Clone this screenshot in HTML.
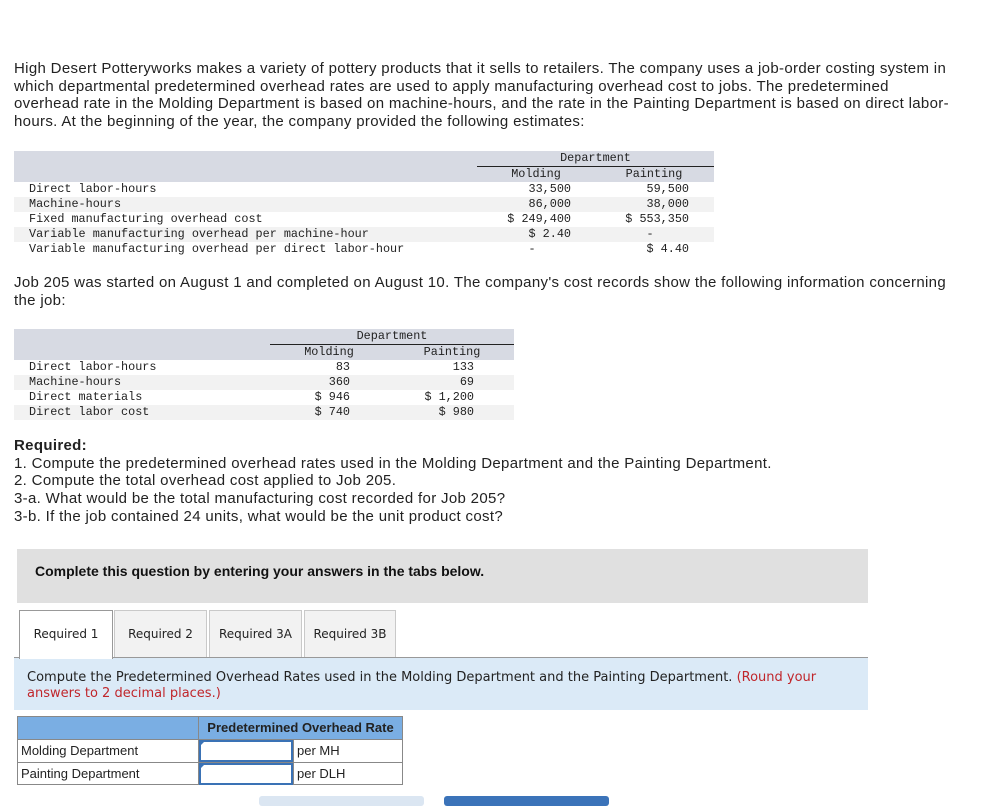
<!DOCTYPE html>
<html><head><meta charset="utf-8"><style>
*{margin:0;padding:0;box-sizing:border-box}
body{width:993px;height:803px;background:#fff;position:relative;overflow:hidden;font-family:"Liberation Sans",Arial,sans-serif;color:#222}
.a{position:absolute;white-space:nowrap}
.p{font-size:15px;line-height:17.7px;letter-spacing:0.33px}
.m{font-family:"Liberation Mono","DejaVu Sans Mono",monospace;font-size:11.8px;line-height:15px;color:#222}
.r{text-align:right}
.c{text-align:center}
.band{position:absolute;background:#d7dae3}
.str{position:absolute;background:#f2f2f2}
.tab{position:absolute;top:610px;height:48px;background:#f2f2f2;border:1px solid #c9c9c9;border-bottom:none;font-family:"DejaVu Sans",Verdana,sans-serif;font-size:12px;line-height:46px;text-align:center;color:#222}
</style></head><body>

<div class="a p" style="left:14px;top:60px">High Desert Potteryworks makes a variety of pottery products that it sells to retailers. The company uses a job-order costing system in<br>which departmental predetermined overhead rates are used to apply manufacturing overhead cost to jobs. The predetermined<br>overhead rate in the Molding Department is based on machine-hours, and the rate in the Painting Department is based on direct labor-<br>hours. At the beginning of the year, the company provided the following estimates:</div>

<div class="band" style="left:14px;top:151px;width:700px;height:31px"></div>
<div class="str" style="left:14px;top:197px;width:700px;height:15px"></div>
<div class="str" style="left:14px;top:227px;width:700px;height:15px"></div>
<div class="a" style="left:477px;top:166px;width:237px;height:1px;background:#222"></div>
<div class="a m c" style="left:477px;top:151px;width:237px">Department</div>
<div class="a m c" style="left:496px;top:167px;width:80px">Molding</div>
<div class="a m c" style="left:614px;top:167px;width:80px">Painting</div>
<div class="a m" style="left:29px;top:182px">Direct labor-hours<br>Machine-hours<br>Fixed manufacturing overhead cost<br>Variable manufacturing overhead per machine-hour<br>Variable manufacturing overhead per direct labor-hour</div>
<div class="a m r" style="left:471px;top:182px;width:100px">33,500<br>86,000<br>$ 249,400<br>$ 2.40<br>-&nbsp;&nbsp;&nbsp;&nbsp;&nbsp;</div>
<div class="a m r" style="left:589px;top:182px;width:100px">59,500<br>38,000<br>$ 553,350<br>-&nbsp;&nbsp;&nbsp;&nbsp;&nbsp;<br>$ 4.40</div>

<div class="a p" style="left:14px;top:274px">Job 205 was started on August 1 and completed on August 10. The company's cost records show the following information concerning<br>the job:</div>

<div class="band" style="left:14px;top:329px;width:500px;height:31px"></div>
<div class="str" style="left:14px;top:375px;width:500px;height:15px"></div>
<div class="str" style="left:14px;top:405px;width:500px;height:15px"></div>
<div class="a" style="left:270px;top:344px;width:244px;height:1px;background:#222"></div>
<div class="a m c" style="left:270px;top:329px;width:244px">Department</div>
<div class="a m c" style="left:289px;top:345px;width:80px">Molding</div>
<div class="a m c" style="left:412px;top:345px;width:80px">Painting</div>
<div class="a m" style="left:29px;top:360px">Direct labor-hours<br>Machine-hours<br>Direct materials<br>Direct labor cost</div>
<div class="a m r" style="left:250px;top:360px;width:100px">83<br>360<br>$ 946<br>$ 740</div>
<div class="a m r" style="left:374px;top:360px;width:100px">133<br>69<br>$ 1,200<br>$ 980</div>

<div class="a p" style="left:14px;top:437px"><b>Required:</b><br>1. Compute the predetermined overhead rates used in the Molding Department and the Painting Department.<br>2. Compute the total overhead cost applied to Job 205.<br>3-a. What would be the total manufacturing cost recorded for Job 205?<br>3-b. If the job contained 24 units, what would be the unit product cost?</div>

<div class="a" style="left:17px;top:549px;width:851px;height:54px;background:#e0e0e0"></div>
<div class="a" style="left:35px;top:563px;font-size:14px;font-weight:bold;color:#111;line-height:17px">Complete this question by entering your answers in the tabs below.</div>

<div class="tab" style="left:19px;width:94px;background:#fff;border-color:#999;height:49px;z-index:2">Required 1</div>
<div class="tab" style="left:114px;width:93px">Required 2</div>
<div class="tab" style="left:209px;width:93px">Required 3A</div>
<div class="tab" style="left:304px;width:92px">Required 3B</div>

<div class="a" style="left:14px;top:657px;width:854px;height:53px;background:#dbeaf7;border-top:1px solid #999"></div>
<div class="a" style="left:27px;top:670px;font-family:'DejaVu Sans',Verdana,sans-serif;font-size:13px;line-height:16px;color:#222">Compute the Predetermined Overhead Rates used in the Molding Department and the Painting Department. <span style="color:#c0262b">(Round your<br>answers to 2 decimal places.)</span></div>

<div class="a" style="left:17px;top:716px;width:386px;height:69px;border:1px solid #888;background:#fff"></div>
<div class="a" style="left:18px;top:717px;width:384px;height:22px;background:#7aaee3"></div>
<div class="a" style="left:18px;top:739px;width:384px;height:1px;background:#888"></div>
<div class="a" style="left:18px;top:762px;width:384px;height:1px;background:#888"></div>
<div class="a" style="left:198px;top:717px;width:1px;height:67px;background:#888"></div>
<div class="a" style="left:293px;top:739px;width:1px;height:45px;background:#888"></div>
<div class="a" style="left:199px;top:720px;width:203px;font-size:13px;font-weight:bold;color:#222;text-align:center">Predetermined Overhead Rate</div>
<div class="a" style="left:199px;top:740px;width:94px;height:22px;border:2px solid #3a72b5"></div>
<div class="a" style="left:199px;top:763px;width:94px;height:22px;border:2px solid #3a72b5"></div>
<div class="a" style="left:200px;top:741px;width:0;height:0;border-left:5px solid #3a72b5;border-bottom:5px solid transparent"></div>
<div class="a" style="left:200px;top:764px;width:0;height:0;border-left:5px solid #3a72b5;border-bottom:5px solid transparent"></div>
<div class="a" style="left:21px;top:743px;font-size:13px">Molding Department</div>
<div class="a" style="left:21px;top:766px;font-size:13px">Painting Department</div>
<div class="a" style="left:297px;top:743px;font-size:13px">per MH</div>
<div class="a" style="left:297px;top:766px;font-size:13px">per DLH</div>

<div class="a" style="left:259px;top:796px;width:165px;height:10px;background:#dbe6f2;border-radius:3px"></div>
<div class="a" style="left:444px;top:796px;width:165px;height:10px;background:#3b73b9;border-radius:3px"></div>
</body></html>
